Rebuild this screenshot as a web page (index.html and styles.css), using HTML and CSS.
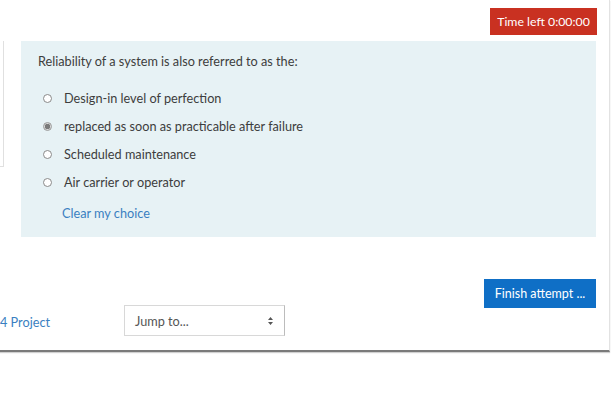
FILE: index.html
```html
<!DOCTYPE html>
<html>
<head>
<meta charset="utf-8">
<link rel="stylesheet" href="styles.css">
</head>
<body>
<div class="page">
  <div class="timer-row">
    <div class="timer">Time left 0:00:00</div>
  </div>
  <div class="main">
    <div class="sidebox"></div>
    <div class="question">
      <div class="qtext">Reliability of a system is also referred to as the:</div>
      <div class="answers">
        <label class="opt"><span class="radio"></span>Design-in level of perfection</label>
        <label class="opt"><span class="radio checked"></span>replaced as soon as practicable after failure</label>
        <label class="opt"><span class="radio"></span>Scheduled maintenance</label>
        <label class="opt"><span class="radio"></span>Air carrier or operator</label>
      </div>
      <a class="clear">Clear my choice</a>
    </div>
  </div>
  <div class="finish-row">
    <div class="finish">Finish attempt ...</div>
  </div>
  <div class="nav-row">
    <a class="prev">4 Project</a>
    <div class="jump">
      <span>Jump to...</span>
      <svg class="arrows" width="7" height="10" viewBox="0 0 7 10"><path d="M3.5 1 L6 4 H1 Z M3.5 9 L6 6 H1 Z" fill="#555"/></svg>
    </div>
  </div>
</div>
</body>
</html>
```
FILE: styles.css
```css
html, body { margin: 0; padding: 0; background: #fff; }
body {
  font-family: "Lato", "Open Sans", sans-serif;
  font-size: 12.7px;
  color: #3d3d3d;
  width: 613px;
  height: 401px;
}
.page {
  width: 609px;
  height: 350px;
  border-right: 1px solid #e2e2e2;
  border-bottom: 2px solid #7a7a7a;
  box-shadow: 0 1px 1px #d0d0d0;
}
.timer-row {
  display: flex;
  justify-content: flex-end;
  padding: 8px 12px 0 0;
  height: 33px;
  box-sizing: border-box;
}
.timer {
  background: #c93121;
  color: #fff;
  height: 27px;
  width: 107px;
  display: flex;
  align-items: center;
  justify-content: center;
  font-size: 12.3px;
}
.main {
  display: flex;
  align-items: flex-start;
  margin-top: 8px;
}
.sidebox {
  width: 3px;
  height: 125px;
  border-right: 1px solid #e0e0e0;
  border-bottom: 1px solid #e0e0e0;
  flex: none;
}
.question {
  margin-left: 17px;
  width: 575px;
  height: 196px;
  background: #e7f2f5;
  box-sizing: border-box;
  padding: 12px 0 0 17px;
}
.qtext { line-height: 16px; }
.answers {
  margin-top: 15px;
  display: flex;
  flex-direction: column;
}
.opt {
  display: flex;
  align-items: center;
  height: 28px;
  padding-left: 5px;
}
.radio {
  width: 7px;
  height: 7px;
  border: 1px solid #8a8a8a;
  border-radius: 50%;
  background: #fff;
  margin-right: 12px;
  box-sizing: content-box;
}
.radio.checked {
  background: radial-gradient(circle, #7a7a7a 0 2.5px, #d8d8d8 3px);
  border-color: #9a9a9a;
}
.clear {
  display: block;
  color: #3a7fc1;
  margin: 9px 0 0 24px;
  line-height: 16px;
}
.finish-row {
  display: flex;
  justify-content: flex-end;
  padding-right: 13px;
  margin-top: 42px;
}
.finish {
  background: #0f6fc6;
  color: #fff;
  width: 112px;
  height: 29px;
  display: flex;
  align-items: center;
  justify-content: center;
  font-size: 12.5px;
}
.nav-row {
  display: flex;
  align-items: center;
  margin-top: -3px;
}
.prev {
  color: #3a7fc1;
  width: 124px;
  padding-top: 3px;
}
.jump {
  width: 161px;
  height: 31px;
  box-sizing: border-box;
  border: 1px solid #d8d8d8;
  border-right-color: #bcbcbc;
  display: flex;
  align-items: center;
  justify-content: space-between;
  padding: 0 10px 0 10px;
  color: #555;
}
```
